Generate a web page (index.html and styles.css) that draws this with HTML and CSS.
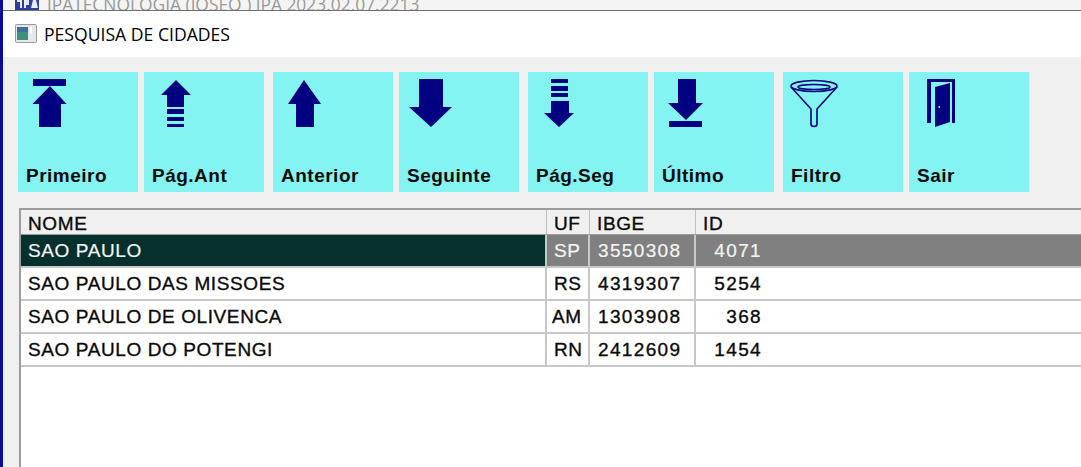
FILE: index.html
```html
<!DOCTYPE html>
<html lang="pt-BR">
<head>
    <meta charset="UTF-8">
    <meta name="viewport" content="width=device-width, initial-scale=1.0">
    <title>Pesquisa de Cidades</title>
    <link rel="stylesheet" href="styles.css">
</head>
<body>
    <div class="parent-bar">
        <svg class="parent-icon" viewBox="0 0 24 16"><rect width="24" height="16" fill="#2a3f9e"/><path d="M2 4h5v8H5V6H2zM9 4h5v5h-3v3H9zM16 12l2-8h3l2 8z" fill="#e8ecf8"/></svg>
        <span class="parent-title">JPATECNOLOGIA (JOSEO ) JPA 2023.02.07.2213</span>
    </div>

    <div class="title-bar">
        <svg class="title-icon" viewBox="0 0 22 19">
            <rect x="0.5" y="0.5" width="21" height="18" rx="1" fill="#e4e8e8" stroke="#9a9a9a"/>
            <rect x="2" y="3" width="11" height="13" fill="#3f8f80"/>
            <rect x="2" y="3" width="11" height="5" fill="#3f6f9a"/>
            <rect x="15" y="3" width="2" height="7" fill="#fff"/>
        </svg>
        <span>PESQUISA DE CIDADES</span>
    </div>

    <div class="content">
        <div class="toolbar">
            <div class="tool-group">
                <button class="tool-button">
                    <svg viewBox="0 0 120 64"><path d="M15 7h33v7H15zM32 14l16.500 18H43v23H21V32h-6.500z"/></svg>
                    Primeiro
                </button>
                <button class="tool-button">
                    <svg viewBox="0 0 120 64"><path d="M32 8l15 15h-7v12H23V23h-6zM23 37h17v5H23zM23 45h17v4H23zM23 52h17v3H23z"/></svg>
                    Pág.Ant
                </button>
            </div>
            <div class="tool-group">
                <button class="tool-button">
                    <svg viewBox="0 0 120 64"><path d="M31 8l17 24h-7v23H23V32h-8z"/></svg>
                    Anterior
                </button>
                <button class="tool-button">
                    <svg viewBox="0 0 120 64"><path d="M20 7h24v28h9L32 55 10 35h10z"/></svg>
                    Seguinte
                </button>
            </div>
            <div class="tool-group">
                <button class="tool-button">
                    <svg viewBox="0 0 120 64"><path d="M23 7h17v4H23zM23 14h17v5H23zM23 21h17v4H23zM23 29h18v12h5L31 55 16 41h7z"/></svg>
                    Pág.Seg
                </button>
                <button class="tool-button">
                    <svg viewBox="0 0 120 64"><path d="M24 7h18v24h7L32 48 14 31h10zM15 49h33v6H15z"/></svg>
                    Último
                </button>
            </div>
            <div class="tool-group">
                <button class="tool-button">
                    <svg viewBox="0 0 120 64">
                        <g class="line-icon">
                            <ellipse cx="31" cy="14" rx="23" ry="5.500"/>
                            <ellipse cx="31" cy="15" rx="16" ry="2.500"/>
                            <path d="M8 15l20 22v15q0 2.500 3 2.500t3-2.500V37l20-22"/>
                        </g>
                    </svg>
                    Filtro
                </button>
                <button class="tool-button">
                    <svg viewBox="0 0 120 64">
                        <path d="M18 7h28v44h-3V10H22v41h-4z"/>
                        <path d="M26 15l15-4v39l-15 5z"/>
                        <rect class="door-knob" x="29.500" y="34" width="1.500" height="2"/>
                    </svg>
                    Sair
                </button>
            </div>
        </div>

        <div class="grid-box">
            <table class="grid">
                <thead>
                    <tr>
                        <th class="col-nome">NOME</th>
                        <th class="col-uf">UF</th>
                        <th class="col-ibge">IBGE</th>
                        <th class="col-id">ID</th>
                        <th class="col-rest"></th>
                    </tr>
                </thead>
                <tbody>
                    <tr class="selected">
                        <td class="current">SAO PAULO</td>
                        <td>SP</td>
                        <td class="num">3550308</td>
                        <td class="num id">4071</td>
                        <td></td>
                    </tr>
                    <tr>
                        <td>SAO PAULO DAS MISSOES</td>
                        <td>RS</td>
                        <td class="num">4319307</td>
                        <td class="num id">5254</td>
                        <td></td>
                    </tr>
                    <tr>
                        <td>SAO PAULO DE OLIVENCA</td>
                        <td class="am">AM</td>
                        <td class="num">1303908</td>
                        <td class="num id">368</td>
                        <td></td>
                    </tr>
                    <tr>
                        <td>SAO PAULO DO POTENGI</td>
                        <td>RN</td>
                        <td class="num">2412609</td>
                        <td class="num id">1454</td>
                        <td></td>
                    </tr>
                </tbody>
            </table>
        </div>
    </div>
</body>
</html>
```

FILE: styles.css
```css
body {
    margin: 0;
    height: 467px;
    overflow: hidden;
    border-left: 3px solid #0a0a9a;
    box-sizing: border-box;
    background-color: #f0f0f0;
    font-family: "Liberation Sans", Arial, sans-serif;
    display: flex;
    flex-direction: column;
}
.parent-bar {
    height: 10px;
    flex: none;
    display: flex;
    align-items: flex-end;
    gap: 8px;
    padding-left: 12px;
    overflow: hidden;
    background-color: #f4f4f4;
    border-bottom: 1px solid #707070;
}
.parent-icon {
    width: 24px;
    height: 16px;
    flex: none;
    margin-bottom: -2px;
}
.parent-title {
    font-family: "Open Sans", sans-serif;
    font-size: 17.4px;
    line-height: 22px;
    margin-bottom: -5px;
    color: #9a9a9a;
    white-space: nowrap;
}
.title-bar {
    height: 46px;
    flex: none;
    display: flex;
    align-items: center;
    gap: 7px;
    padding-left: 12px;
    background-color: #fff;
    color: #000;
    font-family: "Open Sans", sans-serif;
    font-size: 17.6px;
}
.title-icon {
    width: 22px;
    height: 19px;
    flex: none;
    margin-top: -2px;
}
.content {
    flex: 1;
    display: flex;
    flex-direction: column;
    padding: 15px 0 0 15px;
}
.toolbar {
    display: flex;
    gap: 9px;
    margin-bottom: 16px;
}
.tool-group {
    display: flex;
    gap: 6px;
}
.tool-button {
    width: 120px;
    height: 120px;
    border: none;
    background-color: #83f4f1;
    color: #0a0a0a;
    font-family: inherit;
    font-size: 19px;
    font-weight: bold;
    letter-spacing: 0.5px;
    text-align: left;
    display: flex;
    flex-direction: column;
    align-items: flex-start;
    justify-content: space-between;
    padding: 0 0 5px 8px;
    box-sizing: border-box;
}
.tool-button svg {
    width: 120px;
    height: 64px;
    margin-left: -8px;
    fill: #000080;
}
.line-icon {
    fill: none;
    stroke: #000080;
    stroke-width: 1.600;
}
.door-knob {
    fill: #83f4f1;
}
.grid-box {
    flex: 1;
    margin-left: 1px;
    background-color: #fff;
    border-top: 2px solid #9c9c9c;
    border-left: 2px solid #9c9c9c;
}
.grid {
    width: 100%;
    border-collapse: separate;
    border-spacing: 0;
    table-layout: fixed;
    font-size: 19px;
    color: #0a0a0a;
    -webkit-text-stroke: 0.35px #0a0a0a;
    letter-spacing: 0.6px;
}
.grid th {
    height: 25px;
    padding: 3px 0 0 7px;
    box-sizing: border-box;
    background-color: #f0f0f0;
    border-bottom: 1px solid #9c9c9c;
    border-right: 1px solid #c0c0c0;
    text-align: left;
    font-weight: normal;
    line-height: 20px;
}
th.col-id,
th.col-rest {
    border-right: none;
}
.col-nome {
    width: 526px;
}
.col-uf {
    width: 43px;
}
.col-ibge {
    width: 106px;
}
.col-id {
    width: 70px;
}
.grid td {
    height: 33px;
    padding: 0 0 0 7px;
    box-sizing: border-box;
    background-color: #fff;
    border-bottom: 2px solid #c8c8c8;
    border-right: 2px solid #c8c8c8;
    white-space: nowrap;
}
.grid td:last-child {
    border-right: none;
}
.grid td.am {
    padding-left: 5px;
}
.grid td.num {
    padding-left: 8px;
    letter-spacing: 1.35px;
}
.grid td.id {
    padding: 0 4px 0 0;
    text-align: right;
    border-right: none;
}
.grid .selected td {
    background-color: #808080;
    color: #f4f4f4;
    -webkit-text-stroke: 0.2px #f4f4f4;
}
.grid .selected td.current {
    background-color: #06302c;
}
```
